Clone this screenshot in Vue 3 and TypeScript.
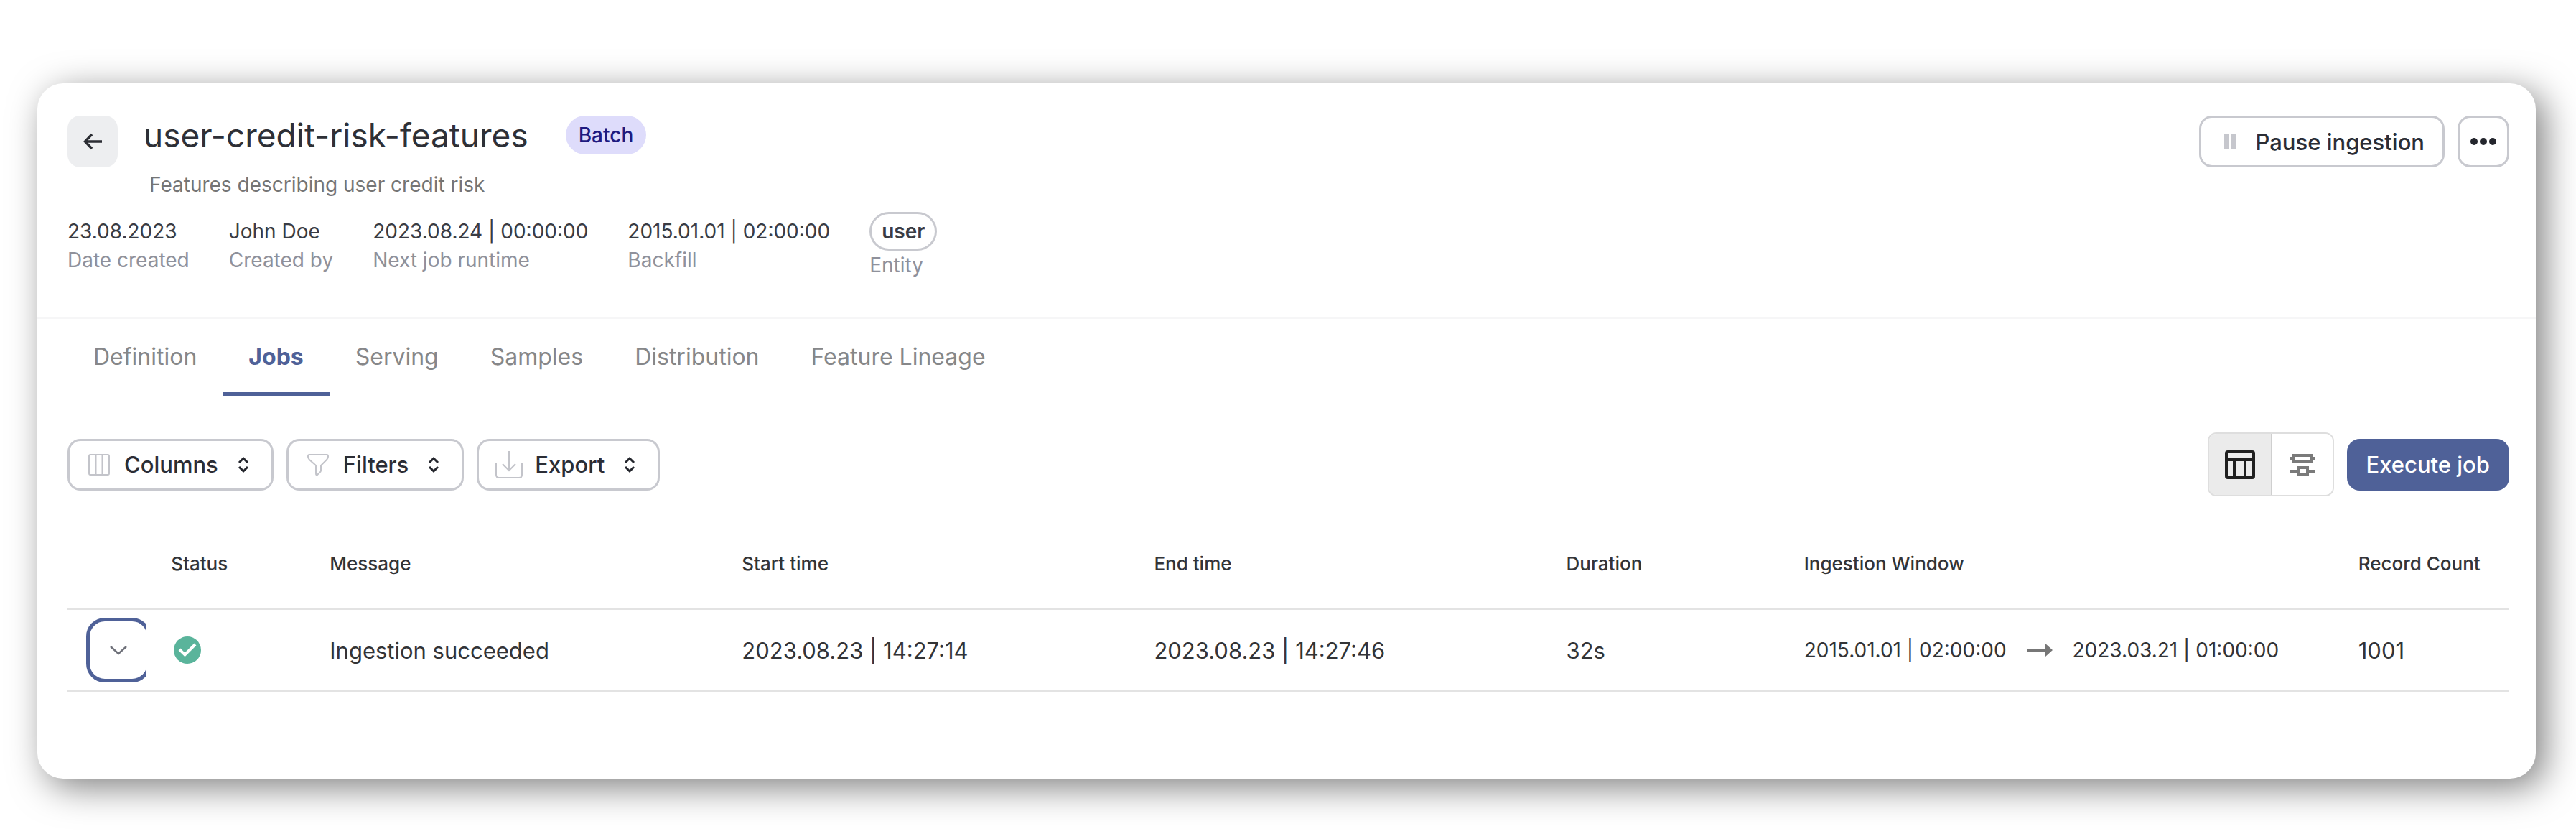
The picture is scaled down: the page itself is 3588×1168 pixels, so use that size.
<script setup lang="ts">
import { ref } from 'vue'

const meta = [
  { value: '23.08.2023', label: 'Date created' },
  { value: 'John Doe', label: 'Created by' },
  { value: '2023.08.24 | 00:00:00', label: 'Next job runtime' },
  { value: '2015.01.01 | 02:00:00', label: 'Backfill' },
]
const tabs = ['Definition', 'Jobs', 'Serving', 'Samples', 'Distribution', 'Feature Lineage']
const activeTab = ref('Jobs')
const tools = ['Columns', 'Filters', 'Export']
const view = ref<'table' | 'flow'>('table')

interface Job {
  message: string
  start: string
  end: string
  duration: string
  from: string
  to: string
  records: number
}
const jobs: Job[] = [
  {
    message: 'Ingestion succeeded',
    start: '2023.08.23 | 14:27:14',
    end: '2023.08.23 | 14:27:46',
    duration: '32s',
    from: '2015.01.01 | 02:00:00',
    to: '2023.03.21 | 01:00:00',
    records: 1001,
  },
]
</script>

<template>
  <main class="card">
    <header class="head">
      <div class="title-row">
        <button class="back" type="button" aria-label="Back">
          <svg width="28" height="24" viewBox="0 0 28 24" fill="none" stroke="#2b2d33" stroke-width="3.500">
            <path d="M27 12H4M13 2L3.500 12L13 22" />
          </svg>
        </button>
        <div class="titles">
          <div class="name-line">
            <h1>user-credit-risk-features</h1>
            <span class="badge">Batch</span>
          </div>
          <p class="subtitle">Features describing user credit risk</p>
        </div>
        <div class="actions">
          <button class="btn pause" type="button">
            <svg width="16" height="20" viewBox="0 0 16 20" fill="#c6c7cd">
              <rect width="6" height="20" /><rect x="10" width="6" height="20" />
            </svg>
            Pause ingestion
          </button>
          <button class="btn more" type="button" aria-label="More">
            <svg width="36" height="10" viewBox="0 0 36 10" fill="#24262d">
              <circle cx="5" cy="5" r="5" /><circle cx="18" cy="5" r="5" /><circle cx="31" cy="5" r="5" />
            </svg>
          </button>
        </div>
      </div>
      <dl class="meta">
        <div v-for="m in meta" :key="m.label">
          <dd>{{ m.value }}</dd>
          <dt>{{ m.label }}</dt>
        </div>
        <div>
          <dd class="pill">user</dd>
          <dt>Entity</dt>
        </div>
      </dl>
    </header>

    <nav class="tabs">
      <a v-for="t in tabs" :key="t" href="#" :class="{ active: t === activeTab }" @click.prevent="activeTab = t">{{ t }}</a>
    </nav>

    <section class="toolbar">
      <button v-for="t in tools" :key="t" class="btn tool" type="button">
        <svg v-if="t === 'Columns'" width="32" height="32" viewBox="0 0 32 32" fill="none" stroke="#c3c4ca" stroke-width="2">
          <rect x="2" y="2" width="28" height="28" rx="2" /><path d="M11.500 2V30M20.500 2V30" />
        </svg>
        <svg v-else-if="t === 'Filters'" width="32" height="32" viewBox="0 0 32 32" fill="none" stroke="#c3c4ca" stroke-width="2" stroke-linejoin="round">
          <path d="M4 2H28Q30 2 30 4V5Q30 7 28 9L20 17V24Q20 26 18 27L15 30Q13 31 13 28V17L4 9Q2 7 2 5V4Q2 2 4 2Z" />
        </svg>
        <svg v-else class="wide" width="40" height="40" viewBox="0 0 40 40" fill="none" stroke="#c3c4ca" stroke-width="2">
          <path d="M2 18V34Q2 38 6 38H34Q38 38 38 34V18M20 1V28M11 19L20 28L29 19" />
        </svg>
        {{ t }}
        <svg class="sort" width="16" height="24" viewBox="0 0 16 24" fill="none" stroke="#24262d" stroke-width="3">
          <path d="M2 9L8 3L14 9M2 15L8 21L14 15" />
        </svg>
      </button>
      <div class="toggle">
        <button type="button" aria-label="Table view" :class="{ on: view === 'table' }" @click="view = 'table'">
          <svg width="42" height="40" viewBox="0 0 42 40" fill="none" stroke="#1f1f1f" stroke-width="4">
            <rect x="2" y="2" width="38" height="36" rx="2" /><path d="M2 13H40M13 13V38M28 13V38" />
          </svg>
        </button>
        <button type="button" aria-label="Flow view" :class="{ on: view === 'flow' }" @click="view = 'flow'">
          <svg width="36" height="32" viewBox="0 0 36 32" fill="none" stroke="#7a7a7a" stroke-width="4">
            <path d="M6 3H30V12H6ZM0 7H6M30 7H36M13 20H25V29H13ZM0 25H13M25 25H36" />
          </svg>
        </button>
      </div>
      <button class="primary" type="button">Execute job</button>
    </section>

    <table>
      <colgroup>
        <col class="c-expand" /><col class="c-status" /><col class="c-wide" /><col class="c-wide" />
        <col class="c-wide" /><col class="c-duration" /><col class="c-window" /><col />
      </colgroup>
      <thead>
        <tr>
          <td></td>
          <th>Status</th><th>Message</th><th>Start time</th><th>End time</th>
          <th>Duration</th><th>Ingestion Window</th><th>Record Count</th>
        </tr>
      </thead>
      <tbody>
        <tr v-for="j in jobs" :key="j.start">
          <td class="expand-cell">
            <button class="expand" type="button" aria-label="Expand row">
              <svg width="24" height="14" viewBox="0 0 24 14" fill="none" stroke="#6f717a" stroke-width="2.500">
                <path d="M1 2L12 12L23 2" />
              </svg>
            </button>
          </td>
          <td>
            <svg width="46" height="40" viewBox="0 0 46 40" role="img" aria-label="Succeeded">
              <circle cx="23" cy="20" r="19" fill="#5ab49b" />
              <path d="M12 19L19.500 26.500L34 12" fill="none" stroke="#fff" stroke-width="4" />
            </svg>
          </td>
          <td>{{ j.message }}</td>
          <td>{{ j.start }}</td>
          <td>{{ j.end }}</td>
          <td>{{ j.duration }}</td>
          <td>
            <div class="window">
              <span>{{ j.from }}</span>
              <svg width="36" height="18" viewBox="0 0 36 18" fill="#777">
                <path d="M0 7H26V0L36 9L26 18V11H0Z" />
              </svg>
              <span>{{ j.to }}</span>
            </div>
          </td>
          <td>{{ j.records }}</td>
        </tr>
      </tbody>
    </table>
  </main>
</template>

<style>
body {
  background: #fff;
}
</style>

<style scoped>
.card {
  margin: 116px 56px 82px 52px;
  padding-bottom: 120px;
  border-radius: 36px;
  background: #fff;
  box-shadow: 12px 12px 50px rgba(0, 0, 0, 0.5);
  font-family: Inter, "Liberation Sans", sans-serif;
  font-size: 31px;
  color: #333437;
}
button {
  font: inherit;
  color: inherit;
  margin: 0;
  padding: 0;
  display: flex;
  align-items: center;
  justify-content: center;
  cursor: pointer;
}
svg {
  flex: none;
  display: block;
}
.head {
  padding: 45px 37px 0 42px;
  height: 328px;
  box-sizing: border-box;
  border-bottom: 3px solid #f6f6f7;
}
.title-row {
  display: flex;
  align-items: flex-start;
}
.back {
  width: 70px;
  height: 72px;
  border: 0;
  border-radius: 18px;
  background: #edeef0;
}
.titles {
  margin-left: 36px;
}
.name-line {
  display: flex;
  align-items: center;
  gap: 52px;
  height: 54px;
}
h1 {
  margin: 0;
  font-size: 46px;
  font-weight: 400;
  line-height: 54px;
  color: #2e3037;
}
.badge {
  height: 54px;
  padding: 0 18px;
  border-radius: 27px;
  background: #dedcfb;
  color: #1f1a80;
  font-size: 28px;
  font-weight: 500;
  line-height: 54px;
}
.subtitle {
  margin: 24px 0 0 8px;
  font-size: 28px;
  line-height: 36px;
  color: #757575;
}
.actions {
  display: flex;
  gap: 18px;
  margin-left: auto;
}
.btn {
  height: 72px;
  border: 3px solid #c8c9cf;
  border-radius: 18px;
  background: #fff;
  color: #2b2d35;
  font-weight: 500;
}
.pause {
  gap: 28px;
  padding: 0 25px 0 32px;
}
.more {
  width: 72px;
}
.meta {
  display: flex;
  gap: 55px;
  margin: 27px 0 0;
  font-size: 28px;
  line-height: 40px;
}
.meta dd {
  margin: 0;
  color: #3a3c44;
}
.meta dt {
  color: #8f919b;
}
.meta .pill {
  height: 54px;
  margin: -7px 0 0;
  box-sizing: border-box;
  border: 3px solid #c8c9cf;
  border-radius: 27px;
  padding: 0 14px;
  font-weight: 600;
  line-height: 48px;
}
.tabs {
  display: flex;
  padding-left: 42px;
  font-size: 32px;
}
.tabs a {
  padding: 33px 36px 29px;
  border-bottom: 5px solid transparent;
  line-height: 40px;
  color: #868789;
  text-decoration: none;
}
.tabs .active {
  border-color: #4f6198;
  color: #4f6198;
  font-weight: 700;
}
.toolbar {
  display: flex;
  align-items: center;
  gap: 18px;
  padding: 51px 37px 0 42px;
}
.tool {
  gap: 19px;
  padding: 0 31px 0 25px;
}
.tool .wide {
  margin: 0 -3px;
}
.tool .sort {
  margin-left: 8px;
}
.toggle {
  display: flex;
  margin-left: auto;
  border: 2px solid #dedede;
  border-radius: 12px;
  overflow: hidden;
}
.toggle button {
  width: 86px;
  height: 85px;
  border: 0;
  background: #fff;
}
.toggle button + button {
  border-left: 2px solid #cfcfcf;
}
.toggle .on {
  background: #ebebeb;
}
.primary {
  height: 72px;
  padding: 0 27px;
  border: 0;
  border-radius: 18px;
  background: #4f6198;
  color: #fff;
  font-weight: 500;
}
table {
  width: calc(100% - 79px);
  margin: 32px 37px 0 42px;
  table-layout: fixed;
  border-collapse: separate;
  border-spacing: 0;
}
.c-expand { width: 3.24%; }
.c-status { width: 6.5%; }
.c-wide { width: 16.88%; }
.c-duration { width: 9.74%; }
.c-window { width: 22.7%; }
th,
td {
  box-sizing: border-box;
  padding: 0 0 0 34px;
  border-bottom: 3px solid #e3e3e3;
  text-align: left;
  white-space: nowrap;
}
th {
  height: 126px;
  font-size: 26px;
  font-weight: 500;
}
tbody td {
  height: 115px;
}
.expand-cell {
  padding-left: 26px;
  overflow: hidden;
}
.expand {
  width: 90px;
  height: 90px;
  border: 5px solid #4f6198;
  border-radius: 26px;
  background: #fff;
}
.window {
  display: flex;
  align-items: center;
  gap: 28px;
  font-size: 28px;
}
</style>
